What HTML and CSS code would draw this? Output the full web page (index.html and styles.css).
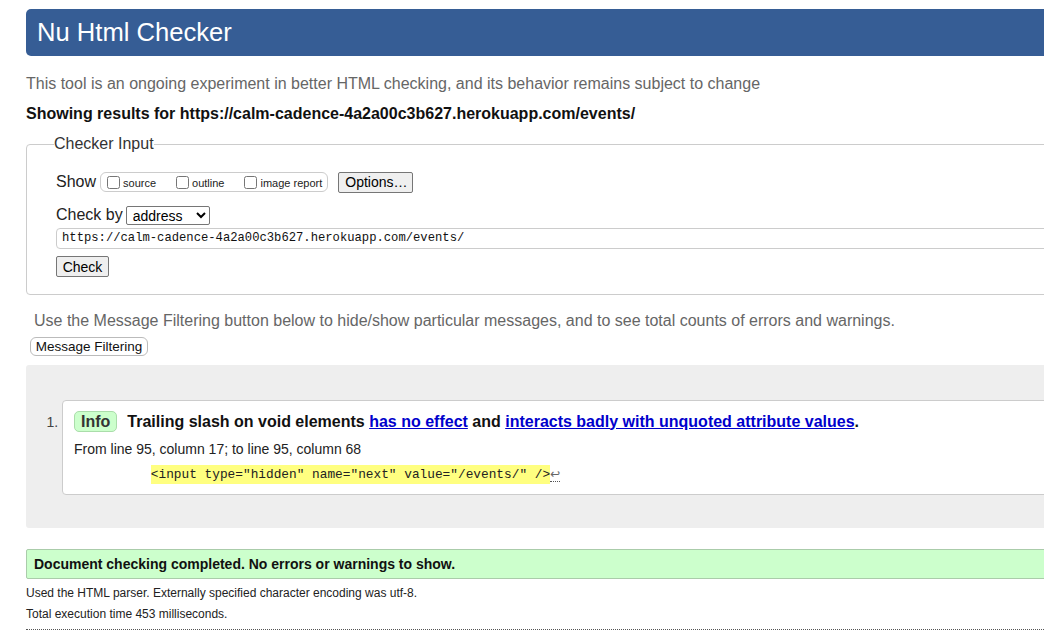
FILE: index.html
```html
<!DOCTYPE html>
<html lang="en">
<head>
<meta charset="utf-8">
<title>Showing results for https://calm-cadence-4a2a00c3b627.herokuapp.com/events/ - Nu Html Checker</title>
<link rel="stylesheet" href="styles.css">
</head>
<body>
<div class="page">
  <h1 class="banner">Nu Html Checker</h1>
  <p class="tagline">This tool is an ongoing experiment in better HTML checking, and its behavior remains subject to change</p>
  <p class="showing">Showing results for https://calm-cadence-4a2a00c3b627.herokuapp.com/events/</p>

  <fieldset class="input-set">
    <legend>Checker Input</legend>
    <div class="row show-row">
      <span class="lbl">Show</span>
      <span class="opts">
        <label class="opt"><input type="checkbox"><span>source</span></label>
        <label class="opt"><input type="checkbox"><span>outline</span></label>
        <label class="opt last"><input type="checkbox"><span>image report</span></label>
      </span>
      <button class="btn options">Options…</button>
    </div>
    <div class="row check-row">
      <span class="lbl">Check by</span>
      <select class="sel"><option>address</option></select>
    </div>
    <div class="url">https://calm-cadence-4a2a00c3b627.herokuapp.com/events/</div>
    <button class="btn check">Check</button>
  </fieldset>

  <p class="filter-note">Use the Message Filtering button below to hide/show particular messages, and to see total counts of errors and warnings.</p>
  <button class="filter-btn">Message Filtering</button>

  <div class="results">
    <ol class="msgs">
      <li class="msg">
        <div class="msg-box">
          <p class="msg-head"><span class="badge">Info</span><span class="msg-text">Trailing slash on void elements <a href="#">has no effect</a> and <a href="#">interacts badly with unquoted attribute values</a>.</span></p>
          <p class="loc">From line 95, column 17; to line 95, column 68</p>
          <p class="extract"><code>          <b>&lt;input type="hidden" name="next" value="/events/" /&gt;</b><span class="lf">↩</span></code></p>
        </div>
      </li>
    </ol>
  </div>

  <p class="success">Document checking completed. No errors or warnings to show.</p>
  <p class="details">Used the HTML parser. Externally specified character encoding was utf-8.</p>
  <p class="details">Total execution time 453 milliseconds.</p>
  <div class="rule"></div>
</div>
</body>
</html>
```

FILE: styles.css
```css
html, body {
  margin: 0;
  padding: 0;
  background: #fff;
  overflow: hidden;
}
body {
  font-family: "Liberation Sans", Arial, sans-serif;
  color: #111;
}
.page {
  width: 1100px;
  padding: 9px 0 0 26px;
}
.banner {
  margin: 0;
  height: 47px;
  background: #365d95;
  color: #fff;
  border-radius: 5px;
  font-weight: normal;
  font-size: 25.6px;
  line-height: 47px;
  padding-left: 11px;
}
.tagline {
  margin: 18px 0 0;
  font-size: 16px;
  line-height: 20px;
  color: #666;
}
.showing {
  margin: 10px 0 0;
  font-size: 16px;
  line-height: 20px;
  font-weight: bold;
}
.input-set {
  margin: 11px 0 0;
  padding: 18px 0 17px 29px;
  border: 1px solid #ccc;
  border-radius: 4px;
}
.input-set legend {
  margin-left: -2px;
  padding: 0;
  font-size: 16px;
  color: #333;
  line-height: 18px;
}
.row {
  display: flex;
  align-items: center;
}
.lbl {
  font-size: 16px;
  color: #222;
}
.show-row {
  height: 22px;
}
.opts {
  display: flex;
  align-items: center;
  margin-left: 4px;
  height: 18px;
  padding: 0 5px 0 6px;
  border: 1px solid #ccc;
  border-radius: 6px;
}
.opt {
  display: flex;
  align-items: center;
  font-size: 11px;
  color: #222;
  margin-right: 20px;
}
.opt span {
  padding-top: 2px;
}
.opt.last {
  margin-right: 0;
}
.opt input {
  margin: 0 3px 0 0;
  width: 13px;
  height: 13px;
}
.btn {
  font-family: "Liberation Sans", Arial, sans-serif;
  font-size: 14px;
  color: #000;
  background: #efefef;
  border: 1px solid #767676;
  border-radius: 2px;
  padding: 0 6px;
}
.options {
  margin-left: 10px;
  height: 21px;
  width: 75px;
}
.check-row {
  margin-top: 12px;
  height: 20px;
}
.sel {
  margin-left: 3px;
  width: 84px;
  height: 19px;
  font-family: "Liberation Sans", Arial, sans-serif;
  font-size: 14px;
  padding: 0 0 0 2px;
  border: 1px solid #767676;
  border-radius: 2px;
  background: #fff;
}
.url {
  margin-top: 3px;
  height: 19px;
  border: 1px solid #ccc;
  border-radius: 4px;
  padding-left: 5px;
  font-family: "Liberation Mono", monospace;
  font-size: 12.2px;
  line-height: 19px;
  color: #111;
}
.check {
  margin-top: 7px;
  height: 21px;
  width: 53px;
  padding: 0;
}
.filter-note {
  margin: 16px 0 0 8px;
  font-size: 16px;
  line-height: 20px;
  color: #666;
}
.filter-btn {
  display: block;
  margin: 6px 0 0 4px;
  height: 19px;
  width: 118px;
  padding: 0;
  font-family: "Liberation Sans", Arial, sans-serif;
  font-size: 13.5px;
  color: #111;
  background: #fff;
  border: 1px solid #bbb;
  border-radius: 6px;
}
.results {
  margin-top: 9px;
  background: #eee;
  border-radius: 3px;
  padding: 35px 0 33px;
}
.msgs {
  margin: 0;
  padding: 0 0 0 36px;
  font-size: 14px;
  color: #444;
}
.msg-box {
  background: #fff;
  border: 1px solid #ccc;
  border-radius: 4px;
  padding: 10px 0 10px 11px;
  color: #222;
}
.msg-head {
  margin: 0;
  display: flex;
  align-items: center;
  height: 21px;
}
.badge {
  display: inline-block;
  height: 19px;
  line-height: 19px;
  padding: 0 6px;
  background: #ccffcc;
  border: 1px solid #aaddaa;
  border-radius: 5px;
  font-weight: bold;
  font-size: 16px;
  color: #333;
}
.msg-text {
  margin-left: 10px;
  font-weight: bold;
  font-size: 16px;
  color: #111;
}
.msg-text a {
  color: #0000cc;
}
.loc {
  margin: 8px 0 0;
  font-size: 14px;
  line-height: 18px;
  color: #222;
}
.extract {
  margin: 6px 0 0;
  line-height: 18px;
}
.extract code {
  white-space: pre;
  font-family: "Liberation Mono", monospace;
  font-size: 12.8px;
  color: #222;
}
.extract b {
  font-weight: normal;
  background: #ffff80;
  padding: 2px 0;
}
.lf {
  color: #666;
  border-bottom: 1px dotted #555;
  font-family: "DejaVu Sans", sans-serif;
  font-size: 12px;
}
.success {
  margin: 21px 0 0;
  height: 28px;
  line-height: 28px;
  padding-left: 7px;
  background: #ccffcc;
  border: 1px solid #aaccaa;
  border-radius: 2px;
  font-weight: bold;
  font-size: 14px;
  color: #111;
}
.details {
  margin: 7px 0 0;
  font-size: 12px;
  line-height: 15px;
  color: #222;
}
.details + .details {
  margin-top: 6px;
}
.rule {
  margin-top: 7px;
  border-top: 1px dotted #555;
}
```
